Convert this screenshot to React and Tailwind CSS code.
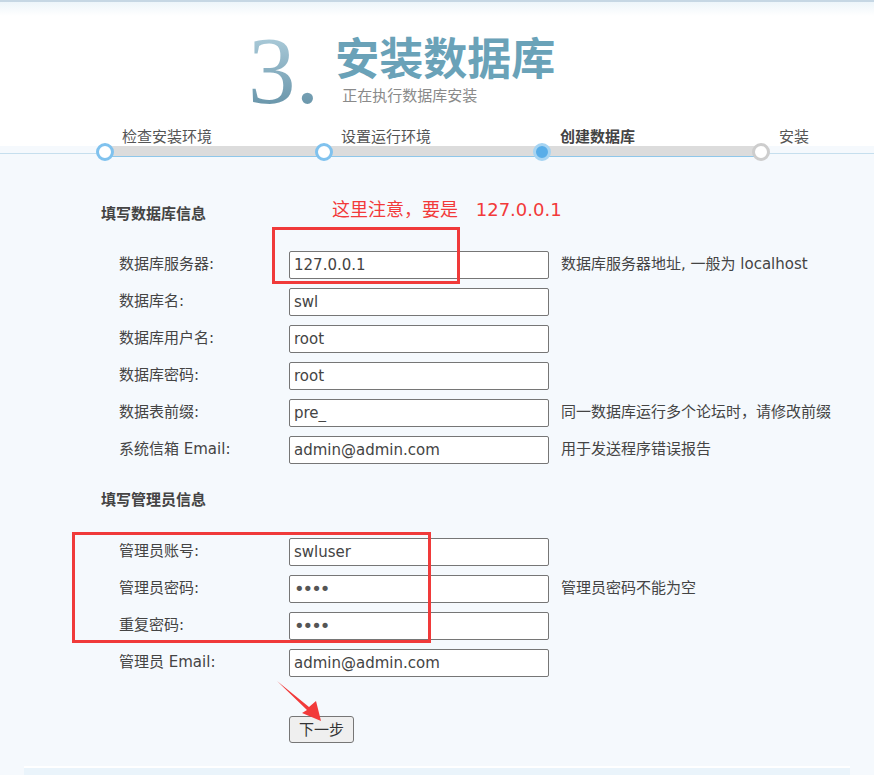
import React from "react";

const steps = [
    { label: "检查安装环境", state: "done" },
    { label: "设置运行环境", state: "done" },
    { label: "创建数据库", state: "active" },
    { label: "安装", state: "todo" },
];

const dbRows = [
    { label: "数据库服务器:", value: "127.0.0.1", hint: "数据库服务器地址, 一般为 localhost" },
    { label: "数据库名:", value: "swl" },
    { label: "数据库用户名:", value: "root" },
    { label: "数据库密码:", value: "root" },
    { label: "数据表前缀:", value: "pre_", hint: "同一数据库运行多个论坛时，请修改前缀" },
    { label: "系统信箱 Email:", value: "admin@admin.com", hint: "用于发送程序错误报告" },
];

const adminRows = [
    { label: "管理员账号:", value: "swluser" },
    { label: "管理员密码:", value: "1234", password: true, hint: "管理员密码不能为空" },
    { label: "重复密码:", value: "1234", password: true },
    { label: "管理员 Email:", value: "admin@admin.com" },
];

const Circle = ({ state }) => {
    if (state === "active") {
        return <div className="w-[18px] h-[18px] rounded-full border-[3px] border-[#a6d4f2] bg-[#58ade8]" />;
    }
    if (state === "todo") {
        return <div className="w-[18px] h-[18px] rounded-full border-[3px] border-[#cdcdcd] bg-white" />;
    }
    return <div className="w-[18px] h-[18px] rounded-full border-[3px] border-[#80c2ee] bg-white" />;
};

const Row = ({ row }) => (
    <div className="flex items-center h-[37px]">
        <div className="w-[188px] shrink-0 pl-[18px] text-[15px] text-[#444]">{row.label}</div>
        <input
            readOnly
            type={row.password ? "password" : "text"}
            value={row.value}
            className={
                row.password
                    ? "w-[260px] h-[28px] border border-[#767676] rounded-[2px] bg-white px-[4px] text-[18px] tracking-[-2px] text-[#555] outline-none"
                    : "w-[260px] h-[28px] border border-[#767676] rounded-[2px] bg-white px-[4px] text-[15px] text-[#444] outline-none"
            }
        />
        {row.hint && <div className="ml-[12px] text-[15px] text-[#444] whitespace-nowrap">{row.hint}</div>}
    </div>
);

const App = () => {
    return (
        <div className="relative w-[874px] min-h-[775px] bg-[#f5f9fd] font-['DejaVu_Sans','Noto_Sans_CJK_SC',sans-serif] text-[#444] overflow-hidden">
            {/* header */}
            <div className="bg-white">
                <div className="h-[2px] bg-[#c6d7e4]" />
                <div className="h-[14px] bg-linear-to-b from-[#edf5fa] to-white" />
                <div className="flex items-start h-[110px] pl-[248px]">
                    <div className="mt-[8px] text-[95px] leading-none font-['Liberation_Serif',serif] bg-linear-to-b from-[#b6d4e1] to-[#5d8ca2] bg-clip-text text-transparent">
                        3.
                    </div>
                    <div className="ml-[16px] mt-[18px] font-['Noto_Sans_CJK_SC',sans-serif]">
                        <div className="text-[44px] leading-none font-bold text-[#6aa2b8]">安装数据库</div>
                        <div className="mt-[9px] pl-[7px] text-[15px] leading-none text-[#8a8a8a]">正在执行数据库安装</div>
                    </div>
                </div>
                <div className="flex h-[20px] pl-[122px] text-[15px] leading-[20px] font-['Noto_Sans_CJK_SC',sans-serif]">
                    {steps.map((s) => (
                        <div
                            key={s.label}
                            className={
                                s.state === "active"
                                    ? "w-[219px] shrink-0 font-bold text-[#444]"
                                    : "w-[219px] shrink-0 text-[#555]"
                            }
                        >
                            {s.label}
                        </div>
                    ))}
                </div>
            </div>

            {/* progress track */}
            <div className="relative z-10 -mt-[3px] -mb-[8px] ml-[96px] w-[674px] h-[18px]">
                <div className="absolute left-[9px] right-[9px] top-[3px] h-[11px] bg-[#dcdcdc] border-b border-[#8fc7ea]" />
                <div className="relative flex justify-between">
                    {steps.map((s) => (
                        <Circle key={s.label} state={s.state} />
                    ))}
                </div>
            </div>

            {/* form panel */}
            <div className="border-t border-[#c6dfee] pl-[101px] pt-[50px]">
                <div className="text-[15px] leading-[20px] font-bold text-[#444]">填写数据库信息</div>
                <div className="mt-[22px]">
                    {dbRows.map((r) => (
                        <Row key={r.label} row={r} />
                    ))}
                </div>
                <div className="mt-[22px] text-[15px] leading-[20px] font-bold text-[#444]">填写管理员信息</div>
                <div className="mt-[23px]">
                    {adminRows.map((r) => (
                        <Row key={r.label} row={r} />
                    ))}
                </div>
                <button className="mt-[35px] ml-[188px] w-[65px] h-[27px] border border-[#767676] rounded-[3px] bg-[#efefef] text-[15px] text-[#333] font-['Noto_Sans_CJK_SC',sans-serif]">
                    下一步
                </button>
                <div className="h-[23px]" />
            </div>
            <div className="mx-[24px] h-[11px] border-t-2 border-white bg-[#eaf4fb]" />

            {/* red annotations */}
            <div className="absolute left-[332px] top-[201px] text-[18px] leading-none text-[#f23a3a] whitespace-nowrap">
                这里注意，要是 <span className="ml-[12px]">127.0.0.1</span>
            </div>
            <div className="absolute left-[272px] top-[227px] w-[188px] h-[57px] border-[3px] border-[#f03a3a]" />
            <div className="absolute left-[72px] top-[532px] w-[359px] h-[111px] border-[3px] border-[#f03a3a]" />
            <svg className="absolute left-[270px] top-[674px]" width="60" height="52" viewBox="0 0 60 52">
                <polygon points="7,7 39,33 46,27 51,47 32,39 37,36" fill="#f23a3a" />
            </svg>
        </div>
    );
};

export default App;
